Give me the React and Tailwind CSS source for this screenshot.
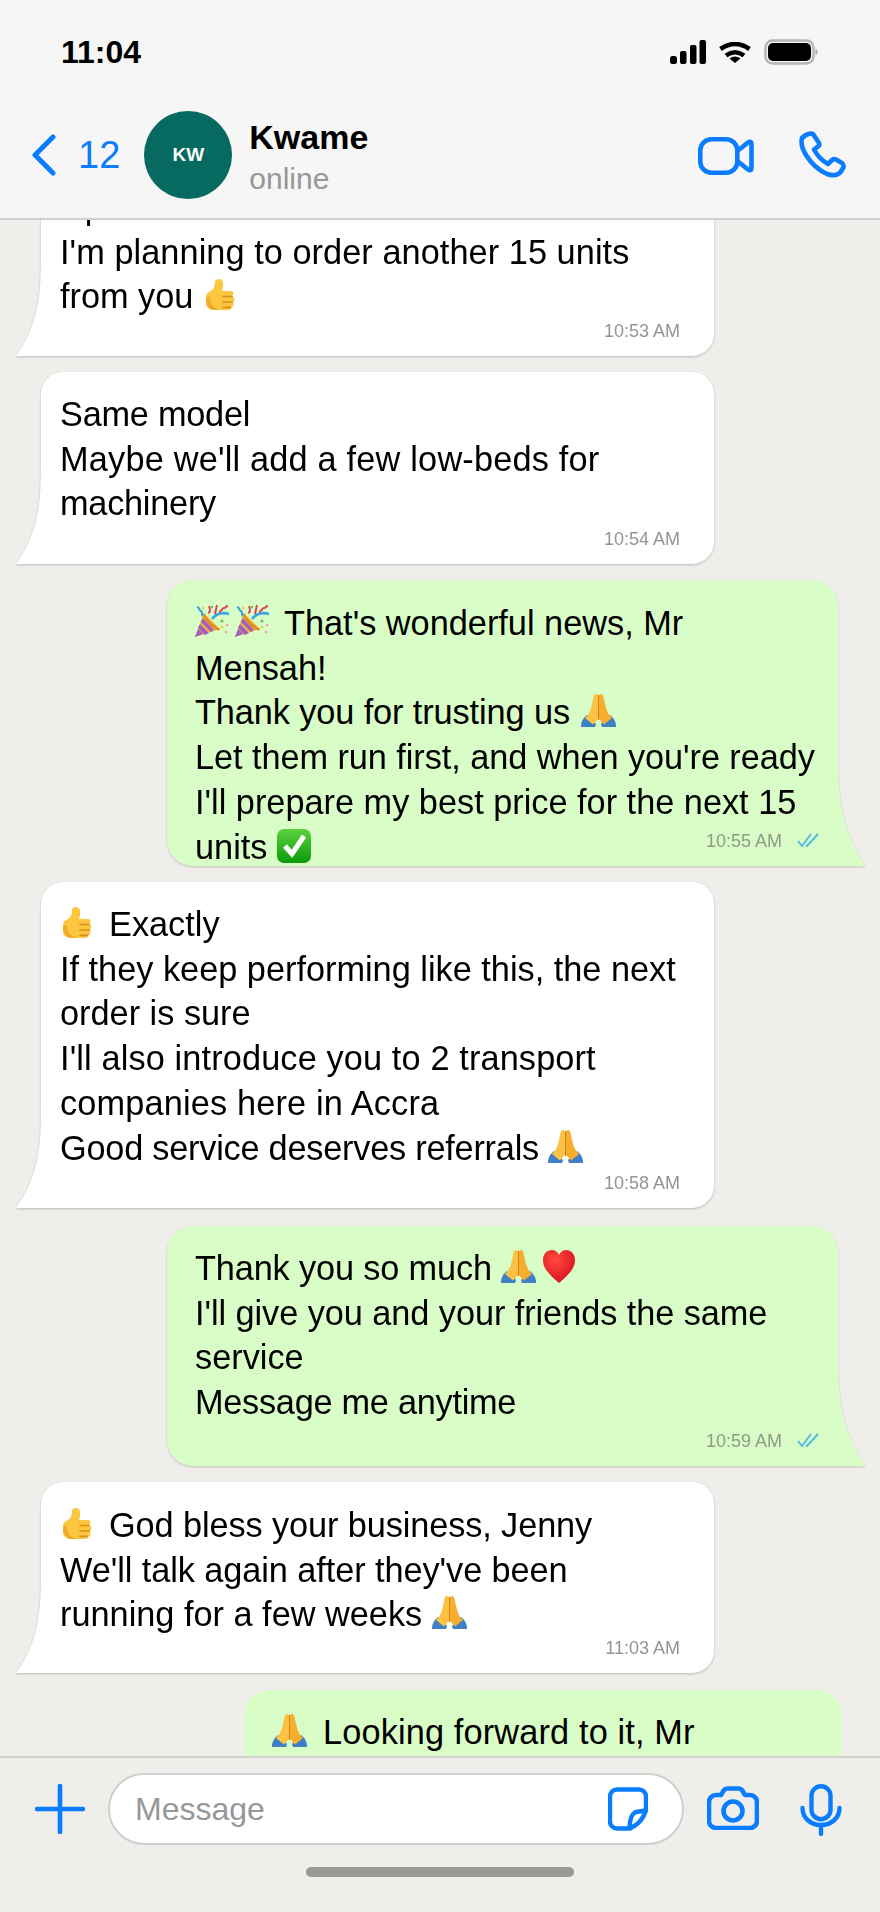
const SANS = "font-['Liberation_Sans',Arial,sans-serif]";

function Thumb({ extra = "" }) {
  return (
    <svg viewBox="0 0 30 31" className={`inline-block w-[30px] h-[31px] align-[-2px] ${extra}`}>
      <path d="M1 18C1 15 3 13 6 12C9 10 10 7 10 3C10 1 12 0 14 0C17 0 19 3 18 8L17 12H26C29 12 29 16 27 17C30 18 30 22 27.500 23C29 25 29 28 26 28.500C27 30 25 31 23 31H9C4 31 1 28 1 24Z" fill="#fcc63f" />
      <path d="M1 20C1 26 4 31 9 31H15C10 30 6 27 5 20C4.500 17 2 17 1 20Z" fill="#f0ab2a" />
      <path d="M18 17.500H27M18 23H27.500M18 28.300H25.500" stroke="#d98e14" strokeWidth="1.7" strokeLinecap="round" fill="none" />
    </svg>
  );
}
function Pray({ extra = "" }) {
  return (
    <svg viewBox="0 0 35 34" className={`inline-block w-[35px] h-[34px] align-[-3px] ${extra}`}>
      <path d="M0 34C0 30 1 26 6 22L15 31L14 34Z" fill="#3f7fc4" />
      <path d="M35 34C35 30 34 26 29 22L20 31L21 34Z" fill="#3f7fc4" />
      <path d="M17 2C15 0 13 1 12.500 4L10 15C9 19 7 22 4 25L12 31.500L17 26Z" fill="#fdc245" />
      <path d="M18 2C20 0 22 1 22.500 4L25 15C26 19 28 22 31 25L23 31.500L18 26Z" fill="#f7ae2e" />
      <path d="M17.500 2V27" stroke="#cf8315" strokeWidth="1" />
    </svg>
  );
}
function Party({ last = false }) {
  return (
    <svg viewBox="0 0 34 34" className={`inline-block w-[34px] h-[34px] align-[-3px] ${last ? "mr-[15px]" : "mr-[6px]"}`}>
      <path d="M0 33L9 9L25 25Z" fill="#f5b42e" />
      <path d="M9 9C12 15 19 22 25 25C25 28 20 26 15 21C10 16 7 11 9 9Z" fill="#d98a22" />
      <path d="M0 33L3 25L8 30ZM5 20L14 29L10 31L3 24ZM7.500 14L19 26L16 28L6 18Z" fill="#a25ec4" />
      <path d="M17 15C21 10 27 8 34 10" stroke="#35a7e6" strokeWidth="2.600" fill="none" />
      <path d="M2 3C5 3 3 6 6 7C8 8 6 11 8 12" stroke="#35a7e6" strokeWidth="2.200" fill="none" />
      <path d="M13 9C16 8 15 5 14 2M20 10L22 1M24 8C27 8 26 4 29 4C31 4 31 2 33 2" stroke="#e2435c" strokeWidth="2" fill="none" />
      <circle cx="27" cy="17" r="1.500" fill="#6bbf4e" />
      <circle cx="32" cy="21" r="1.400" fill="#f0a0a0" />
      <circle cx="27" cy="23" r="1.300" fill="#f4c542" />
      <circle cx="31" cy="28" r="1.300" fill="#f0a0a0" />
      <circle cx="17" cy="3" r="1.200" fill="#6bbf4e" />
      <circle cx="8" cy="4" r="1.200" fill="#f4c542" />
    </svg>
  );
}
function Check() {
  return (
    <svg viewBox="0 0 34 34" className="inline-block w-[34px] h-[34px] align-[-4px]">
      <defs>
        <linearGradient id="chk" x1="0" y1="0" x2="0" y2="1">
          <stop offset="0" stopColor="#5ed03f" />
          <stop offset="1" stopColor="#0a9a0a" />
        </linearGradient>
      </defs>
      <rect x="0" y="0" width="34" height="34" rx="7" fill="url(#chk)" />
      <path d="M8 17l7 8L27 7" stroke="#fff" strokeWidth="5" fill="none" />
    </svg>
  );
}
function Heart() {
  return (
    <svg viewBox="0 0 32 33" className="inline-block w-[32px] h-[33px] align-[-3px] ml-[1px]">
      <defs>
        <radialGradient id="hrt" cx="0.4" cy="0.3" r="0.75">
          <stop offset="0" stopColor="#ff4a3d" />
          <stop offset="1" stopColor="#d80f1c" />
        </radialGradient>
      </defs>
      <path d="M16 33C7 25 0 19 0 10 0 4 4 0 9 0c3 0 6 2 7 5 1-3 4-5 7-5 5 0 9 4 9 10 0 9-7 15-16 23z" fill="url(#hrt)" />
    </svg>
  );
}

function Incoming({ lines, time, h, pt = "pt-[20px]", mt = "mt-[16px]" }) {
  return (
    <div className={`relative ml-[41px] w-[673px] shrink-0 ${mt} drop-shadow-[0_1px_1px_rgba(0,0,0,0.22)]`}>
      <svg viewBox="0 0 26 100" className="absolute left-[-25px] bottom-0 w-[26px] h-[100px]">
        <path d="M25 0C25 40 22 70 0 100H26V0z" fill="#ffffff" />
      </svg>
      <div className={`relative bg-white rounded-[22px] rounded-bl-none px-[19px] ${pt} ${h}`}>
        {lines.map((l, i) => <div key={i} className="whitespace-nowrap">{l}</div>)}
        <span className="absolute right-[34px] bottom-[14px] text-[18px] leading-[21px] text-[#949494]">{time}</span>
      </div>
    </div>
  );
}

function Outgoing({ lines, time, h, pt = "pt-[20px]", mt = "mt-[17px]" }) {
  return (
    <div className={`relative ml-[167px] w-[671px] shrink-0 ${mt} drop-shadow-[0_1px_1px_rgba(0,0,0,0.18)]`}>
      <svg viewBox="0 0 28 105" className="absolute right-[-27px] bottom-0 w-[28px] h-[105px]">
        <path d="M1 0C1 40 6 70 28 105H0V0z" fill="#d9fdc6" />
      </svg>
      <div className={`relative bg-[#d9fdc6] rounded-[26px] rounded-br-none pl-[28px] ${pt} ${h}`}>
        {lines.map((l, i) => <div key={i} className="whitespace-nowrap">{l}</div>)}
        <span className="absolute right-[56px] bottom-[14px] text-[18px] leading-[21px] text-[#8e9a88]">{time}</span>
        <svg viewBox="0 0 22 14" className="absolute right-[19px] bottom-[19px] w-[22px] h-[14px]" fill="none" stroke="#5ab9e0" strokeWidth="2">
          <path d="M1 8l4 5L14 1" />
          <path d="M9 12l1 1L21 1" />
        </svg>
      </div>
    </div>
  );
}

export default function App() {
  return (
    <div className={`w-[880px] h-[1912px] flex flex-col overflow-hidden bg-[#f0eeea] text-black ${SANS}`}>
      <header className="h-[220px] shrink-0 bg-[#f6f6f6] border-b-2 border-[#cfcfcf] flex flex-col">
        <div className="h-[106px] shrink-0 flex items-start pl-[61px] pr-[62px] pt-[32px]">
          <span className="text-[32px] leading-[40px] font-bold">11:04</span>
          <div className="ml-auto flex items-center gap-[12px] pt-[7px]">
            <svg viewBox="0 0 36 24" className="w-[36px] h-[24px]" fill="#000">
              <rect x="0" y="16" width="7" height="8" rx="2.500" />
              <rect x="10" y="11" width="6.500" height="13" rx="2" />
              <rect x="20" y="5" width="6.500" height="19" rx="2" />
              <rect x="29.500" y="0" width="6.500" height="24" rx="2" />
            </svg>
            <svg viewBox="0 0 34 21" className="w-[34px] h-[21px]" fill="none" stroke="#000" strokeWidth="4.6">
              <path d="M2.500 7Q17 -3 31.500 7" />
              <path d="M8 13.500Q17 7 26 13.500" />
              <path d="M17 21L11.500 16.500Q17 12.500 22.500 16.500Z" fill="#000" stroke="none" />
            </svg>
            <svg viewBox="0 0 54 26" className="w-[54px] h-[26px]">
              <rect x="1.500" y="1.500" width="48" height="23" rx="7" fill="none" stroke="#b5b5b5" strokeWidth="2.500" />
              <rect x="4" y="4" width="43" height="18" rx="5" fill="#000" />
              <path d="M51.500 10c1.500.5 2 1.500 2 3s-.5 2.500-2 3z" fill="#a8a8a8" />
            </svg>
          </div>
        </div>
        <div className="flex-1 flex items-start pl-[32px] relative">
          <svg viewBox="0 0 24 42" className="w-[24px] h-[42px] mt-[28px] shrink-0" fill="none" stroke="#0a7cff" strokeWidth="5" strokeLinecap="round" strokeLinejoin="round">
            <path d="M21 3L3 21l18 18" />
          </svg>
          <span className="ml-[22px] mt-[27px] text-[38px] leading-[44px] text-[#0a7cff]">12</span>
          <div className="ml-[24px] mt-[5px] w-[88px] h-[88px] rounded-full bg-[#066a60] flex items-center justify-center text-white font-bold text-[19px] shrink-0">KW</div>
          <div className="ml-[17px] flex flex-col">
            <span className="text-[34px] leading-[40px] font-bold mt-[11px]">Kwame</span>
            <span className="text-[30px] leading-[36px] text-[#979797] mt-[4px]">online</span>
          </div>
          <div className="ml-auto flex items-start pr-[33px]">
            <svg viewBox="0 0 56 38" className="w-[56px] h-[38px] mt-[31px]" fill="none" stroke="#0a7cff" strokeWidth="4.6" strokeLinejoin="round">
              <rect x="2.300" y="2.300" width="37" height="33.400" rx="11" />
              <path d="M39.300 14L50 5.500Q53.500 3.500 53.500 7V31Q53.500 34.500 50 32.500L39.300 24" />
            </svg>
            <svg viewBox="0 0 50 48" className="w-[50px] h-[48px] ml-[43px] mt-[24px]" fill="none" stroke="#0a7cff" strokeWidth="4.6" strokeLinejoin="round">
              <path d="M5 8Q9 4 14 3.500Q16 3.500 17 5.500L22 13Q23 15 21 16.500L17 19.500Q22 29 31 34L35 30Q37 28.500 39 29.500L45 33Q47 34.500 46.500 37Q44 43 40 44.500Q36 46 30 44Q17 38 9 25Q3 15 5 8Z" />
            </svg>
          </div>
        </div>
      </header>

      <main className="flex-1 min-h-0 overflow-hidden flex flex-col text-[34.3px] leading-[44.7px]">
        <Incoming mt="mt-[-54px]" pt="pt-[19px]" h="h-[190px]" time="10:53 AM" lines={[
          "Update",
          <span className="tracking-[0.06px]">I'm planning to order another 15 units</span>,
          <>from you <Thumb extra="ml-[2px]" /></>,
        ]} />
        <Incoming h="h-[192px]" time="10:54 AM" lines={[
          <span className="tracking-[-0.24px]">Same model</span>,
          <span className="tracking-[0.2px]">Maybe we'll add a few low-beds for</span>,
          <span className="tracking-[-0.25px]">machinery</span>,
        ]} />
        <Outgoing mt="mt-[16px]" pt="pt-[21px]" h="h-[286px]" time="10:55 AM" lines={[
          <><Party /><Party last />That's wonderful news, Mr</>,
          "Mensah!",
          <><span className="tracking-[-0.1px]">Thank you for trusting us</span> <Pray extra="ml-[2px]" /></>,
          <span className="tracking-[-0.06px]">Let them run first, and when you're ready</span>,
          "I'll prepare my best price for the next 15",
          <>units <Check /></>,
        ]} />
        <Incoming h="h-[326px]" time="10:58 AM" lines={[
          <><Thumb extra="ml-[2px] mr-[17px]" />Exactly</>,
          "If they keep performing like this, the next",
          "order is sure",
          <span className="tracking-[0.13px]">I'll also introduce you to 2 transport</span>,
          <span className="tracking-[0.16px]">companies here in Accra</span>,
          <><span className="tracking-[-0.23px]">Good service deserves referrals</span> <Pray /></>,
        ]} />
        <Outgoing mt="mt-[18px]" h="h-[240px]" time="10:59 AM" lines={[
          <><span className="tracking-[-0.14px]">Thank you so much</span> <Pray extra="mr-[6px]" /><Heart /></>,
          <span className="tracking-[-0.06px]">I'll give you and your friends the same</span>,
          "service",
          <span className="tracking-[-0.27px]">Message me anytime</span>,
        ]} />
        <Incoming pt="pt-[21px]" h="h-[191px]" time="11:03 AM" lines={[
          <><Thumb extra="ml-[2px] mr-[17px]" /><span className="tracking-[-0.1px]">God bless your business, Jenny</span></>,
          <span className="tracking-[-0.07px]">We'll talk again after they've been</span>,
          <>running for a few weeks <Pray /></>,
        ]} />
        <div className="ml-[244px] mt-[17px] w-[598px] h-[200px] shrink-0 bg-[#d9fdc6] rounded-t-[26px] pl-[28px] pt-[20px] whitespace-nowrap">
          <Pray extra="mr-[16px]" /><span className="tracking-[0.15px]">Looking forward to it, Mr</span>
        </div>
      </main>

      <footer className="h-[156px] shrink-0 bg-[#f0eeea] border-t-2 border-[#d2d0cd] relative flex flex-col">
        <div className="flex items-start pl-[35px] pt-[15px]">
          <svg viewBox="0 0 50 50" className="w-[50px] h-[50px] mt-[11px] shrink-0" fill="none" stroke="#0a7cff" strokeWidth="4.6" strokeLinecap="round">
            <path d="M25 2v46M2 25h46" />
          </svg>
          <div className="ml-[23px] w-[576px] h-[72px] rounded-full bg-white border-2 border-[#cfcfcf] flex items-center pl-[25px] pr-[34px] shrink-0">
            <span className="text-[32px] text-[#979797]">Message</span>
            <svg viewBox="0 0 40 44" className="w-[40px] h-[44px] ml-auto" fill="none" stroke="#0a7cff" strokeWidth="4.4" strokeLinejoin="round">
              <path d="M9 2.500h22a7 7 0 0 1 7 7v14Q34 36 22 41.500H9a7 7 0 0 1-7-7v-25a7 7 0 0 1 7-7z" />
              <path d="M38 23.500L28 25Q22 27 21.500 41" />
            </svg>
          </div>
          <svg viewBox="0 0 52 44" className="w-[52px] h-[44px] ml-[23px] mt-[13px] shrink-0" fill="none" stroke="#0a7cff" strokeWidth="4.6" strokeLinejoin="round">
            <path d="M9 9h5l3-5q1-1.500 3-1.500h12q2 0 3 1.500l3 5h5a7 7 0 0 1 7 7v19a7 7 0 0 1-7 7H9a7 7 0 0 1-7-7V16a7 7 0 0 1 7-7z" />
            <circle cx="26" cy="25" r="9.500" />
          </svg>
          <svg viewBox="0 0 42 52" className="w-[42px] h-[52px] ml-[41px] mt-[11px] shrink-0" fill="none" stroke="#0a7cff" strokeWidth="4.4" strokeLinecap="round">
            <rect x="11.500" y="2.200" width="19" height="33" rx="9.500" />
            <path d="M2.500 24c0 10 8 17 18.500 17s18.500-7 18.500-17M21 41v9" />
          </svg>
        </div>
        <div className="mt-[22px] ml-[306px] w-[268px] h-[10px] rounded-full bg-[#9b9a96]" />
      </footer>
    </div>
  );
}
